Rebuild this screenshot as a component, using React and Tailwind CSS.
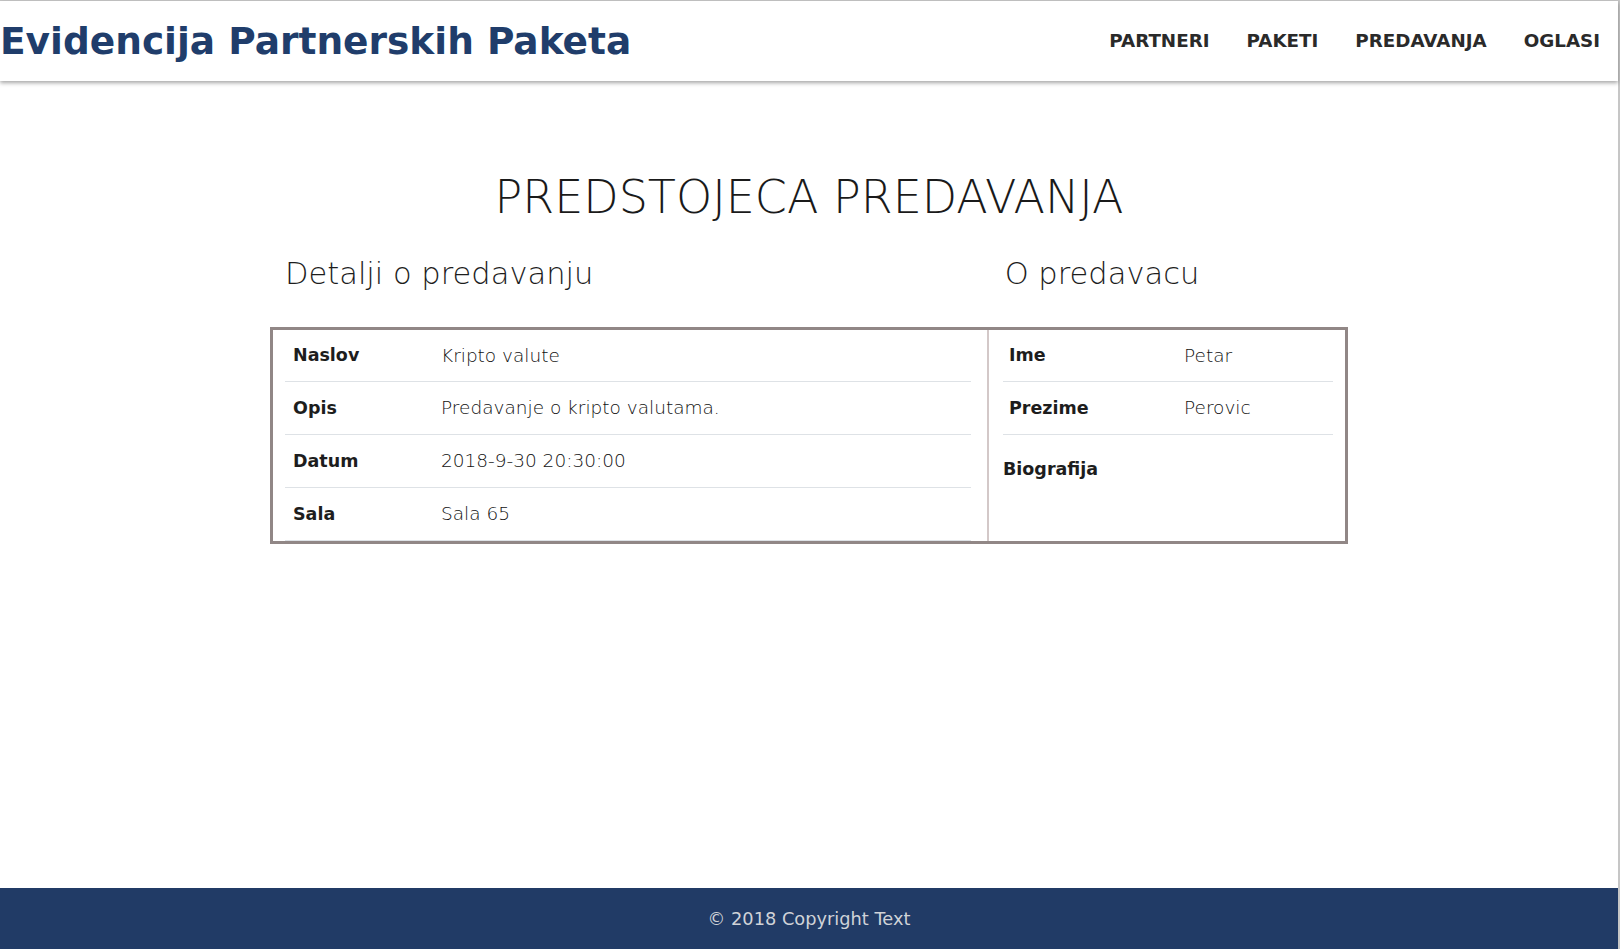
const navItems = ['PARTNERI', 'PAKETI', 'PREDAVANJA', 'OGLASI'];

const lectureRows = [
  { label: 'Naslov', value: 'Kripto valute' },
  { label: 'Opis', value: 'Predavanje o kripto valutama.' },
  { label: 'Datum', value: '2018-9-30 20:30:00' },
  { label: 'Sala', value: 'Sala 65' },
];

const speakerRows = [
  { label: 'Ime', value: 'Petar' },
  { label: 'Prezime', value: 'Perovic' },
];

const App = () => {
  return (
    <div className="min-h-screen flex flex-col bg-white border-t border-r-2 border-[#c6c6c6] font-['DejaVu_Sans',sans-serif] text-[#1d1d1d]">
      {/* Header */}
      <header className="h-[80px] flex items-center justify-between bg-white shadow-[0_2px_4px_rgba(0,0,0,0.35)] relative z-10">
        <h1 className="pt-[2px] text-[37.5px] font-bold text-[#203d6b] leading-none">Evidencija Partnerskih Paketa</h1>
        <nav className="flex items-center gap-[37px] pr-[18px]">
          {navItems.map((item) => (
            <a key={item} href="#" className="text-[18.3px] font-bold text-[#2a2a2a]">
              {item}
            </a>
          ))}
        </nav>
      </header>

      {/* Content */}
      <main className="w-[1078px] mx-auto">
        <h2 className="mt-[89px] text-center text-[46px] leading-[54px] font-light text-[#1a1a1a]">
          PREDSTOJECA PREDAVANJA
        </h2>

        <div className="grid grid-cols-[2fr_1fr] mt-[32px]">
          <h3 className="pl-[15px] text-[30.5px] leading-[36px] font-light">Detalji o predavanju</h3>
          <h3 className="pl-[16px] text-[30.5px] leading-[36px] font-light">O predavacu</h3>
        </div>

        <div className="mt-[35px] grid grid-cols-[716px_1fr] border-[3px] border-[#918786]">
          <div className="pl-[12px] pr-[16px] border-r-2 border-[#d3c8c8]">
            {lectureRows.map((row, i) => (
              <div
                key={row.label}
                className={`flex items-center border-b border-[#dee2e6] ${i === 0 ? 'h-[52px]' : 'h-[53px]'}`}
              >
                <div className="w-[156px] pl-[8px] text-[17.5px] font-bold">{row.label}</div>
                <div className="text-[18.5px] font-light text-[#111]">{row.value}</div>
              </div>
            ))}
          </div>
          <div className="pl-[14px] pr-[12px]">
            {speakerRows.map((row, i) => (
              <div
                key={row.label}
                className={`flex items-center border-b border-[#dee2e6] ${i === 0 ? 'h-[52px]' : 'h-[53px]'}`}
              >
                <div className="w-[181px] pl-[6px] text-[17.5px] font-bold">{row.label}</div>
                <div className="text-[18.5px] font-light text-[#111]">{row.value}</div>
              </div>
            ))}
            <div className="pt-[21px] text-[17.5px] font-bold">Biografija</div>
          </div>
        </div>
      </main>

      {/* Footer */}
      <footer className="mt-auto h-[61px] flex items-center justify-center bg-[#213b66]">
        <p className="pt-[2px] text-[17.8px] text-[#d0d3d8]">© 2018 Copyright Text</p>
      </footer>
    </div>
  );
};

export default App;
